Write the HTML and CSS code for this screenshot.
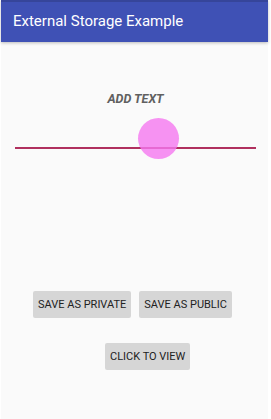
FILE: index.html
```html
<!DOCTYPE html>
<html lang="en">
  <head>
    <meta charset="UTF-8" />
    <meta name="viewport" content="width=device-width, initial-scale=1.0" />
    <title>External Storage Example</title>
    <link rel="stylesheet" href="styles.css">
  </head>
  <body>
    <div class="screen">
      <header class="app-bar">
        <h1>External Storage Example</h1>
      </header>

      <main class="content">
        <div class="input-area">
          <div class="hint">ADD TEXT</div>
          <div class="field">
            <div class="underline"></div>
            <div class="touch-ripple"></div>
          </div>
        </div>

        <div class="button-row">
          <button class="btn">SAVE AS PRIVATE</button>
          <button class="btn">SAVE AS PUBLIC</button>
        </div>

        <div class="button-row center">
          <button class="btn">CLICK TO VIEW</button>
        </div>
      </main>
    </div>
  </body>
</html>
```

FILE: styles.css
```css
:root {
  --primary-color: #3f51b5;
  --primary-dark: #36459a;
  --background-color: #fafafa;
  --accent-line: #b0305e;
  --button-bg: #d6d6d6;
  --text-color: #222222;
  --hint-color: #606060;
}

* {
  box-sizing: border-box;
}

html,
body {
  margin: 0;
  padding: 0;
  height: 100%;
}

body {
  font-family: Roboto, "Noto Sans", sans-serif;
  background-color: #ffffff;
  overflow: hidden;
}

.screen {
  width: 267px;
  margin-left: 1px;
  height: 100%;
  background-color: var(--background-color);
}

.app-bar {
  height: 42px;
  background-color: var(--primary-color);
  border-top: 2px solid var(--primary-dark);
  box-shadow: 0 1px 3px rgba(0, 0, 0, 0.25);
  display: flex;
  align-items: center;
  padding-left: 12px;
}

.app-bar h1 {
  margin: 0;
  color: #ffffff;
  font-size: 15px;
  font-weight: 400;
  padding-bottom: 2px;
}

.content {
  padding: 0 15px;
}

.input-area {
  padding-top: 50px;
}

.hint {
  height: 14px;
  line-height: 14px;
  text-align: center;
  font-size: 12.5px;
  font-weight: 700;
  font-style: italic;
  color: var(--hint-color);
  margin-left: 2px;
}

.field {
  position: relative;
  height: 55px;
}

.underline {
  position: absolute;
  left: -1px;
  right: -3px;
  top: 41px;
  height: 2px;
  background-color: var(--accent-line);
}

/* pressed-state ripple over the edit text */
.touch-ripple {
  position: absolute;
  left: 122px;
  top: 12px;
  width: 41px;
  height: 41px;
  border-radius: 50%;
  background-color: rgba(245, 120, 240, 0.8);
}

.button-row {
  display: flex;
  gap: 8px;
  padding-left: 17px;
}

.input-area + .button-row {
  margin-top: 130px;
}

.button-row.center {
  margin-top: 25px;
  padding-left: 89px;
}

.btn {
  height: 27px;
  padding: 0 5px;
  border: none;
  border-radius: 2px;
  background-color: var(--button-bg);
  color: var(--text-color);
  font-family: Roboto, "Noto Sans", sans-serif;
  font-size: 11px;
  font-weight: 400;
  cursor: pointer;
}
```
